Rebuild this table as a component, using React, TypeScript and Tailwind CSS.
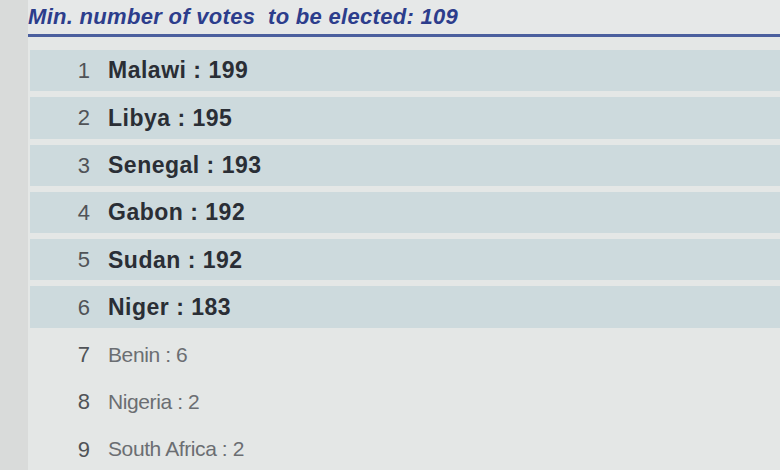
import React from 'react';

interface Candidate {
  rank: number;
  country: string;
  votes: number;
  elected: boolean;
}

const candidates: Candidate[] = [
  { rank: 1, country: 'Malawi', votes: 199, elected: true },
  { rank: 2, country: 'Libya', votes: 195, elected: true },
  { rank: 3, country: 'Senegal', votes: 193, elected: true },
  { rank: 4, country: 'Gabon', votes: 192, elected: true },
  { rank: 5, country: 'Sudan', votes: 192, elected: true },
  { rank: 6, country: 'Niger', votes: 183, elected: true },
  { rank: 7, country: 'Benin', votes: 6, elected: false },
  { rank: 8, country: 'Nigeria', votes: 2, elected: false },
  { rank: 9, country: 'South Africa', votes: 2, elected: false },
];

const App: React.FC = () => {
  return (
    <div
      className="w-[780px] h-[470px] overflow-hidden bg-[#d9dbda] pl-[28px]"
      style={{ fontFamily: '"Liberation Sans", Arial, sans-serif' }}
    >
      <div className="h-full bg-[#e4e7e6]">
        <div className="h-[37px] border-b-[3px] border-[#4b5f9e] bg-[#e6e8e8] flex items-end pb-[6px]">
          <span className="whitespace-pre text-[22px] leading-none font-bold italic text-[#2c3d8c] tracking-[0.3px]">
            Min. number of votes  to be elected: 109
          </span>
        </div>

        <div className="pt-[10px]">
          {candidates.map((c) => (
            <div key={c.rank} className="h-[47.3px] py-[3px] pl-[2px]">
              <div
                className={`h-full flex items-center ${
                  c.elected ? 'bg-[#cddadd]' : ''
                }`}
              >
                <span className="w-[60px] text-right text-[22px] text-[#505357]">
                  {c.rank}
                </span>
                <span
                  className={`ml-[18px] whitespace-nowrap ${
                    c.elected
                      ? 'text-[23px] font-bold text-[#2a2e35] tracking-[0.5px]'
                      : 'text-[21px] text-[#6b6e72] tracking-[-0.4px]'
                  }`}
                >
                  {c.country} : {c.votes}
                </span>
              </div>
            </div>
          ))}
        </div>
      </div>
    </div>
  );
};

export default App;
